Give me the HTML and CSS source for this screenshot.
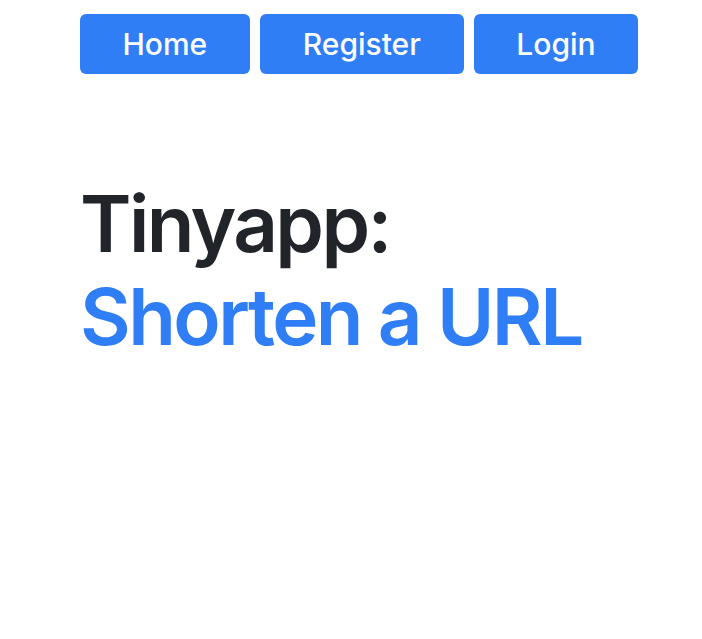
FILE: index.html
```html
<!DOCTYPE html>
<html lang="en">
<head>
<meta charset="utf-8">
<title>Tinyapp</title>
<link rel="stylesheet" href="styles.css">
</head>
<body>
<nav class="nav">
  <a class="btn" href="#">Home</a>
  <a class="btn btn-wide" href="#">Register</a>
  <a class="btn" href="#">Login</a>
</nav>
<main class="main">
  <h1 class="title">Tinyapp:<br><span class="accent">Shorten a URL</span></h1>
</main>
</body>
</html>
```
FILE: styles.css
```css
html, body {
  margin: 0;
  padding: 0;
  background: #ffffff;
  font-family: Inter, "Noto Sans", "Liberation Sans", sans-serif;
}
.nav {
  display: flex;
  gap: 10px;
  padding: 14px 0 0 80px;
}
.btn {
  display: block;
  background: #2f7ef6;
  color: #ffffff;
  text-decoration: none;
  font-size: 30px;
  font-weight: 500;
  line-height: 36px;
  padding: 12px 42.5px;
  border-radius: 6px;
}
.btn-wide {
  padding: 12px 43px;
}
.main {
  padding: 0 0 0 80px;
}
.title {
  margin: 103px 0 0 0;
  font-size: 78px;
  font-weight: 560;
  line-height: 93px;
  color: #212529;
  letter-spacing: -2.6px;
}
.accent {
  color: #2f7ef6;
}
```
